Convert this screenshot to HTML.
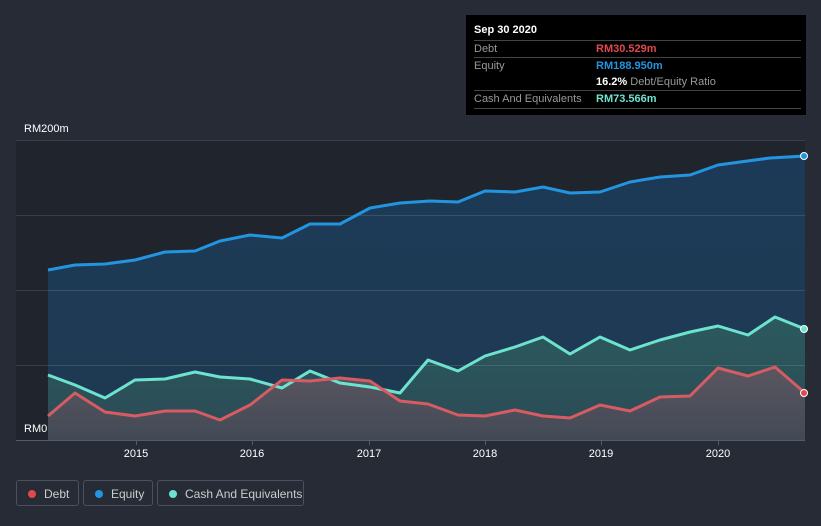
<!DOCTYPE html><html><head><style>
body{margin:0;width:821px;height:526px;background:#262b36;font-family:"Liberation Sans",sans-serif;overflow:hidden;position:relative}
.tt{position:absolute;left:466px;top:15px;width:340px;height:100px;background:#000;color:#fff;font-size:11px}
.row{position:absolute;left:8px;width:327px;border-top:1px solid #444;height:17px;line-height:17px;color:#999}
.v{position:absolute;left:122px;font-weight:bold}
.lg{position:absolute;top:480px;height:26px;border:1px solid #4a505c;border-radius:3px;color:#ccc;font-size:12px;line-height:26px;box-sizing:border-box}
.lg i{position:absolute;left:11px;top:9px;width:8px;height:8px;border-radius:50%}
.lg span{position:absolute;left:27px}
</style></head><body>
<svg width="821" height="526" style="position:absolute;left:0;top:0">
<defs>
<linearGradient id="eq" x1="0" y1="0" x2="0" y2="1"><stop offset="0" stop-color="#1c3a57"/><stop offset="1" stop-color="#1f3a52"/></linearGradient>
<linearGradient id="ca" x1="0" y1="0" x2="0" y2="1"><stop offset="0" stop-color="#2a5a5e"/><stop offset="1" stop-color="#2c4a55"/></linearGradient>
<linearGradient id="de" x1="0" y1="0" x2="0" y2="1"><stop offset="0" stop-color="#5a5660"/><stop offset="1" stop-color="#424a56"/></linearGradient>
</defs>
<rect x="16" y="140" width="789" height="300" fill="#1f242d"/>
<path d="M48,270 L75,265 105,264 135,260 165,252 195,251 220,241 250,235 282,238 310,224 340,224 370,208 400,203 430,201 458,202 485,191 515,192 543,187 570,193 600,192 630,182 660,177 690,175 718,165 740,162 770,158 805,156 L805,440 48,440Z" fill="url(#eq)"/>
<path d="M48,375 L75,385 105,398 135,380 165,379 195,372 220,377 250,379 282,388 310,371 340,383 370,387 400,393 428,360 458,371 485,356 515,347 543,337 570,354 600,337 630,350 660,340 690,332 718,326 748,335 775,317 805,329 L805,440 48,440Z" fill="url(#ca)"/>
<path d="M48,416 L75,393 105,412 135,416 165,411 195,411 220,420 250,405 282,380 310,381 340,378 370,381 400,401 428,404 458,415 485,416 515,410 543,416 570,418 600,405 630,411 660,397 690,396 718,368 748,376 775,367 805,393 L805,440 48,440Z" fill="url(#de)"/>
<g stroke="#ffffff" stroke-opacity="0.12"><line x1="16" x2="805" y1="140.5" y2="140.5"/><line x1="16" x2="805" y1="215.5" y2="215.5"/><line x1="16" x2="805" y1="290.5" y2="290.5"/><line x1="16" x2="805" y1="365.5" y2="365.5"/></g>
<line x1="16" x2="805" y1="440.5" y2="440.5" stroke="#555b66"/>
<g fill="none" stroke-width="3" stroke-linejoin="round">
<polyline stroke="#2394df" points="48,270 75,265 105,264 135,260 165,252 195,251 220,241 250,235 282,238 310,224 340,224 370,208 400,203 430,201 458,202 485,191 515,192 543,187 570,193 600,192 630,182 660,177 690,175 718,165 740,162 770,158 805,156"/>
<polyline stroke="#6de3cf" points="48,375 75,385 105,398 135,380 165,379 195,372 220,377 250,379 282,388 310,371 340,383 370,387 400,393 428,360 458,371 485,356 515,347 543,337 570,354 600,337 630,350 660,340 690,332 718,326 748,335 775,317 805,329"/>
<polyline stroke="#d65b63" points="48,416 75,393 105,412 135,416 165,411 195,411 220,420 250,405 282,380 310,381 340,378 370,381 400,401 428,404 458,415 485,416 515,410 543,416 570,418 600,405 630,411 660,397 690,396 718,368 748,376 775,367 805,393"/>
</g>
<circle cx="804" cy="156" r="3.5" fill="#2394df" stroke="#fff"/>
<circle cx="804" cy="329" r="3.5" fill="#6de3cf" stroke="#fff"/>
<circle cx="804" cy="393" r="3.5" fill="#e0484e" stroke="#fff"/>
<g stroke="#555b66"><line x1="136.5" x2="136.5" y1="440" y2="445"/><line x1="252.5" x2="252.5" y1="440" y2="445"/><line x1="369.5" x2="369.5" y1="440" y2="445"/><line x1="485.5" x2="485.5" y1="440" y2="445"/><line x1="601.5" x2="601.5" y1="440" y2="445"/><line x1="718.5" x2="718.5" y1="440" y2="445"/></g>
<g fill="#fff" font-size="11" text-anchor="middle"><text x="136" y="457">2015</text><text x="252" y="457">2016</text><text x="369" y="457">2017</text><text x="485" y="457">2018</text><text x="601" y="457">2019</text><text x="718" y="457">2020</text></g>
<text x="24" y="132" fill="#fff" font-size="11">RM200m</text>
<rect x="16" y="420" width="32" height="18" fill="#1f242d"/>
<text x="24" y="432" fill="#fff" font-size="11">RM0</text>
</svg>
<div class="tt">
<div style="position:absolute;left:8px;top:9px;font-weight:bold">Sep 30 2020</div>
<div class="row" style="top:25px">Debt<span class="v" style="color:#e0484e">RM30.529m</span></div>
<div class="row" style="top:42px">Equity<span class="v" style="color:#2394df">RM188.950m</span></div>
<div class="row" style="top:59px;border:none"><span class="v" style="color:#fff">16.2% <span style="color:#999;font-weight:normal">Debt/Equity Ratio</span></span></div>
<div class="row" style="top:75px">Cash And Equivalents<span class="v" style="color:#6de3cf">RM73.566m</span></div>
<div class="row" style="top:93px;height:0"></div>
</div>
<div class="lg" style="left:16px;width:63px"><i style="background:#e0484e"></i><span>Debt</span></div>
<div class="lg" style="left:83px;width:70px"><i style="background:#2394df"></i><span>Equity</span></div>
<div class="lg" style="left:157px;width:147px"><i style="background:#6de3cf"></i><span>Cash And Equivalents</span></div>
</body></html>
